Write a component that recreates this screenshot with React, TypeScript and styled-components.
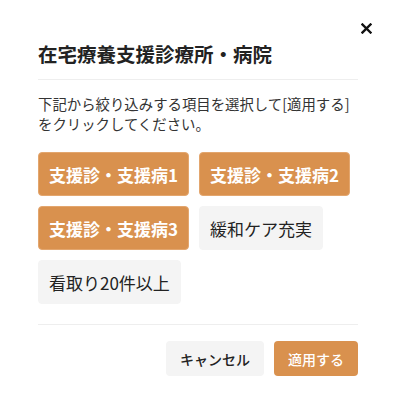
import React, { useState } from 'react';
import styled, { createGlobalStyle } from 'styled-components';

const GlobalStyle = createGlobalStyle`
  html, body {
    margin: 0;
    padding: 0;
    background: #ffffff;
  }
  body {
    font-family: 'Noto Sans CJK JP', 'Noto Sans', sans-serif;
    color: #222222;
  }
`;

const Modal = styled.div`
  position: relative;
  box-sizing: border-box;
  width: 393px;
  height: 409px;
  padding: 40px 35px 0 38px;
  background: #ffffff;
`;

const CloseButton = styled.button`
  position: absolute;
  top: 21px;
  right: 20px;
  width: 14px;
  height: 14px;
  padding: 0;
  border: none;
  background: transparent;
  display: flex;
  align-items: center;
  justify-content: center;
  cursor: pointer;
`;

const Title = styled.h2`
  margin: 0;
  padding-bottom: 11px;
  border-bottom: 1px solid #eeeeee;
  font-size: 19.5px;
  line-height: 28px;
  font-weight: 700;
  color: #222222;
`;

const Description = styled.p`
  margin: 14px 0 0;
  font-size: 14.4px;
  line-height: 20px;
  color: #333333;
`;

const ChipList = styled.div`
  display: flex;
  flex-wrap: wrap;
  gap: 10px;
  margin-top: 18px;
  padding-bottom: 20px;
  border-bottom: 1px solid #eeeeee;
`;

const Chip = styled.button<{ $active: boolean }>`
  box-sizing: border-box;
  height: 44px;
  padding: 0 10px;
  border-radius: 4px;
  border: 1px solid ${p => (p.$active ? '#e3a66e' : '#f4f4f4')};
  background: ${p => (p.$active ? '#d9914e' : '#f4f4f4')};
  color: ${p => (p.$active ? '#ffffff' : '#222222')};
  font-family: inherit;
  font-size: 17px;
  font-weight: ${p => (p.$active ? 700 : 400)};
  line-height: 1;
  cursor: pointer;
`;

const Footer = styled.div`
  display: flex;
  justify-content: flex-end;
  gap: 10px;
  padding-top: 16px;
`;

const FooterButton = styled.button<{ $primary?: boolean }>`
  box-sizing: border-box;
  height: 35px;
  padding: 0 14px;
  border-radius: 4px;
  border: none;
  background: ${p => (p.$primary ? '#d9914e' : '#f4f4f4')};
  color: ${p => (p.$primary ? '#ffffff' : '#222222')};
  font-family: inherit;
  font-size: 14px;
  font-weight: 500;
  cursor: pointer;
`;

const options = [
  '支援診・支援病1',
  '支援診・支援病2',
  '支援診・支援病3',
  '緩和ケア充実',
  '看取り20件以上',
];

export default function App() {
  const [selected, setSelected] = useState<string[]>(options.slice(0, 3));

  const toggle = (label: string) => {
    setSelected(prev =>
      prev.includes(label) ? prev.filter(l => l !== label) : [...prev, label]
    );
  };

  return (
    <>
      <GlobalStyle />
      <Modal>
        <CloseButton aria-label="閉じる">
          <svg width="11" height="11" viewBox="0 0 11 11">
            <path d="M1.5 1.5 L9.5 9.5 M9.5 1.5 L1.5 9.5" stroke="#111" strokeWidth="2.4" strokeLinecap="square" />
          </svg>
        </CloseButton>
        <Title>在宅療養支援診療所・病院</Title>
        <Description>
          下記から絞り込みする項目を選択して[適用する]
          <br />
          をクリックしてください。
        </Description>
        <ChipList>
          {options.map(label => (
            <Chip key={label} $active={selected.includes(label)} onClick={() => toggle(label)}>
              {label}
            </Chip>
          ))}
        </ChipList>
        <Footer>
          <FooterButton>キャンセル</FooterButton>
          <FooterButton $primary>適用する</FooterButton>
        </Footer>
      </Modal>
    </>
  );
}
